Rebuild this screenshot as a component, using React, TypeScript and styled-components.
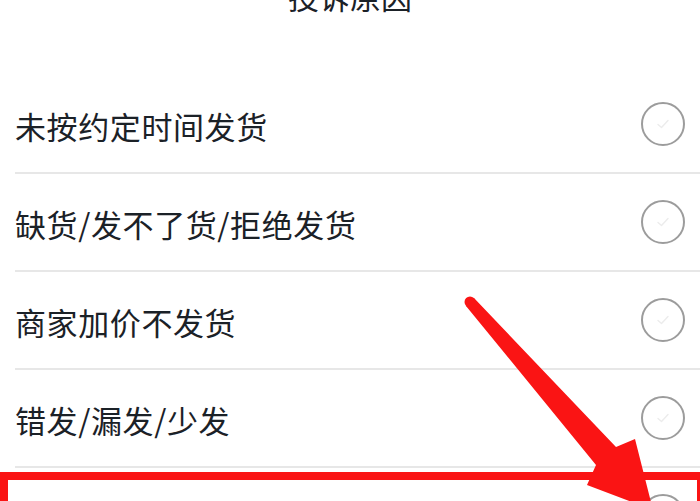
import React from "react";
import styled, { createGlobalStyle } from "styled-components";

const GlobalStyle = createGlobalStyle`
    html, body {
        margin: 0;
        padding: 0;
        background: #ffffff;
    }
    body {
        width: 700px;
        height: 501px;
        overflow: hidden;
        font-family: "Noto Sans CJK SC", "Noto Sans", sans-serif;
    }
`;

const reasons = [
    "未按约定时间发货",
    "缺货/发不了货/拒绝发货",
    "商家加价不发货",
    "错发/漏发/少发",
    "其他原因"
];

export default function App() {
    return (
        <Page>
            <GlobalStyle />
            <Header>
                <Title>投诉原因</Title>
            </Header>
            <List>
                {reasons.map((reason) => (
                    <Row key={reason}>
                        <Label>{reason}</Label>
                        <Radio>
                            <svg width="16" height="16" viewBox="0 0 16 16">
                                <path d="M3 8.5 L6.5 11.5 L13 4.5" fill="none" stroke="#ececec" strokeWidth="1.4" strokeLinecap="round" strokeLinejoin="round" />
                            </svg>
                        </Radio>
                    </Row>
                ))}
            </List>
            <Highlight />
            <Arrow width="700" height="501" viewBox="0 0 700 501">
                <circle cx="470" cy="302" r="5.5" fill="#fa1414" />
                <polygon
                    points="474,298 616,447 635,439 653,510 587,485 596,465 466,306"
                    fill="#fa1414"
                    strokeLinejoin="round"
                />
            </Arrow>
        </Page>
    );
}

const Page = styled.div`
    position: relative;
    width: 700px;
    height: 501px;
    overflow: hidden;
    background: #ffffff;
`;

const Header = styled.div`
    height: 76px;
    display: flex;
    justify-content: center;
    align-items: flex-start;
`;

const Title = styled.div`
    margin-top: -24px;
    font-size: 31px;
    line-height: 40px;
    color: #1b2127;
`;

const List = styled.div`
    display: flex;
    flex-direction: column;
`;

const Row = styled.div`
    height: 96px;
    margin-left: 15px;
    padding-right: 15px;
    display: flex;
    align-items: center;
    justify-content: space-between;
    border-bottom: 2px solid #e7e7e7;
`;

const Label = styled.div`
    margin-top: 4px;
    font-size: 31px;
    line-height: 40px;
    color: #1b2127;
    letter-spacing: 0.6px;
`;

const Radio = styled.div`
    width: 40px;
    height: 40px;
    border: 2px solid #9c9c9c;
    border-radius: 50%;
    display: flex;
    align-items: center;
    justify-content: center;
`;

const Highlight = styled.div`
    position: absolute;
    left: 0;
    top: 472px;
    width: 689px;
    height: 60px;
    border: 8px solid #fa1414;
    border-right-width: 4px;
`;

const Arrow = styled.svg`
    position: absolute;
    left: 0;
    top: 0;
    pointer-events: none;
`;
